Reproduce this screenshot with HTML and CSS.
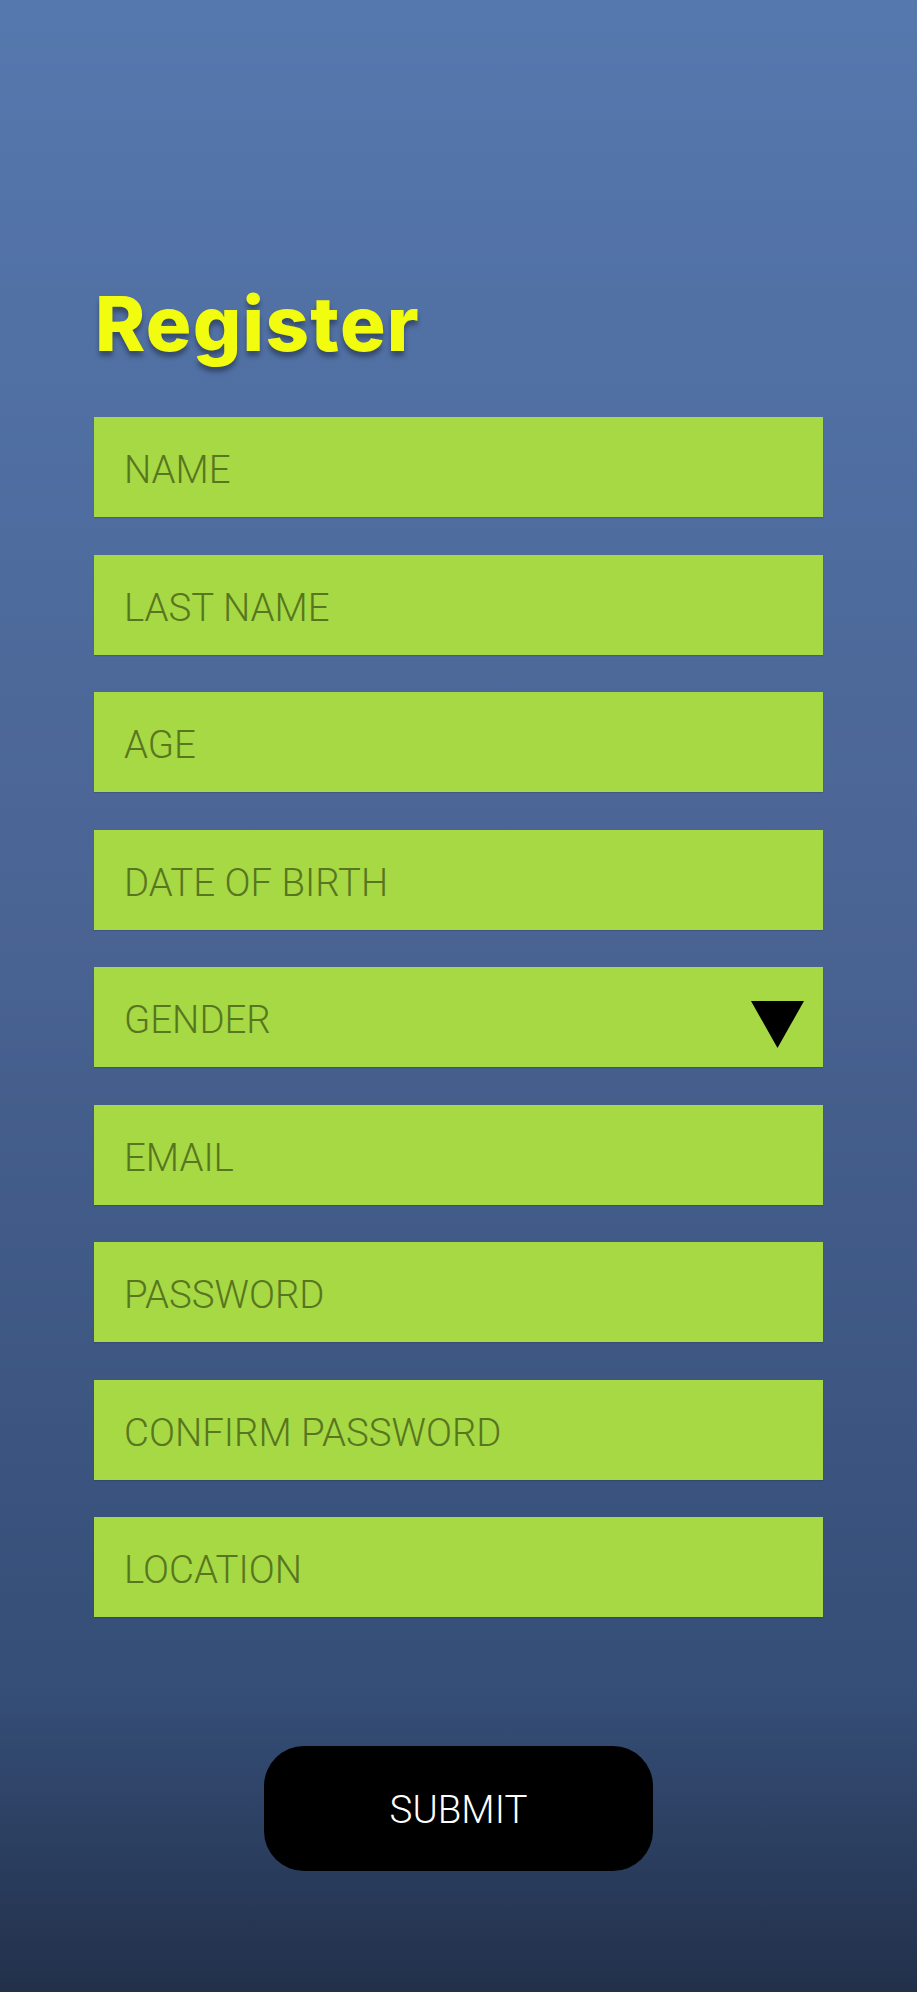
FILE: index.html
```html
<!DOCTYPE html>
<html lang="en">
<head>
<meta charset="utf-8">
<title>Register</title>
<link rel="stylesheet" href="styles.css">
</head>
<body>
<main class="page">
  <h1 class="title">Register</h1>
  <form class="form">
    <div class="field"><span class="label">NAME</span></div>
    <div class="field"><span class="label">LAST NAME</span></div>
    <div class="field"><span class="label">AGE</span></div>
    <div class="field"><span class="label">DATE OF BIRTH</span></div>
    <div class="field"><span class="label">GENDER</span>
      <svg class="arrow" width="53" height="47" viewBox="0 0 53 47"><polygon points="0,0 53,0 26.5,47" fill="#000"/></svg>
    </div>
    <div class="field"><span class="label">EMAIL</span></div>
    <div class="field"><span class="label">PASSWORD</span></div>
    <div class="field"><span class="label">CONFIRM PASSWORD</span></div>
    <div class="field"><span class="label">LOCATION</span></div>
  </form>
  <div class="actions">
    <button class="submit" type="button">SUBMIT</button>
  </div>
</main>
</body>
</html>
```
FILE: styles.css
```css
html, body {
  margin: 0;
  padding: 0;
}
body {
  min-height: 1992px;
  background: linear-gradient(180deg, #5578ae 0%, #4a6494 45%, #354e77 85%, #22304a 100%);
  font-family: Roboto, "Liberation Sans", sans-serif;
}
.page {
  padding: 283px 94px 0 94px;
  width: 729px;
}
.title {
  margin: 0 0 0 1px;
  font-family: Inter, Roboto, sans-serif;
  font-size: 76px;
  line-height: 80px;
  font-weight: 800;
  letter-spacing: 1.3px;
  color: #f2fc0f;
  text-shadow: 0 5px 5px rgba(0, 0, 0, 0.35);
}
.form {
  margin-top: 54px;
  display: flex;
  flex-direction: column;
  gap: 37.5px;
}
.field {
  height: 100px;
  box-sizing: border-box;
  background: #a6d944;
  display: flex;
  align-items: flex-start;
  padding: 0 19px 0 30px;
  box-shadow: 0 1px 1px rgba(0, 0, 0, 0.12);
}
.label {
  margin-top: 6px;
  line-height: 94px;
  font-size: 38.4px;
  color: #58761f;
  font-weight: 300;
}
.arrow {
  margin-left: auto;
  margin-top: 34px;
}
.actions {
  display: flex;
  justify-content: center;
  margin-top: 129px;
}
.submit {
  width: 389px;
  height: 125px;
  padding: 3px 0 0 0;
  border: none;
  border-radius: 40px;
  background: #000;
  color: #fff;
  font-family: Roboto, "Liberation Sans", sans-serif;
  font-size: 38.5px;
  font-weight: 300;
  line-height: 122px;
}
```
